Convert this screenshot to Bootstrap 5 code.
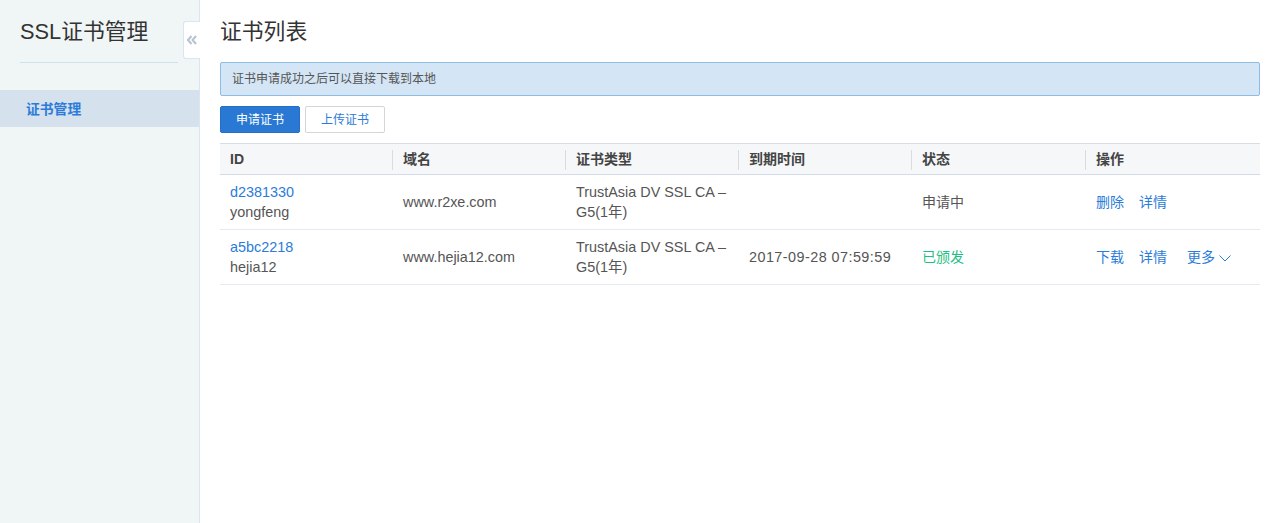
<!DOCTYPE html>
<html lang="zh">
<head>
  <meta charset="UTF-8" />
  <title>SSL证书管理</title>
  <link rel="stylesheet" href="https://cdn.jsdelivr.net/npm/bootstrap@5.3.2/dist/css/bootstrap.min.css" />
  <style>
    html, body { height: 100%; }
    body {
      font-family: "Liberation Sans", "Noto Sans CJK SC", sans-serif;
      font-size: 14px;
      color: #4a4a4a;
      overflow: hidden;
    }
    .shell { height: 523px; }
    .side {
      width: 200px;
      background: #f0f6f6;
      border-right: 1px solid #d7e6f0;
      position: relative;
    }
    .side-title {
      font-size: 21.8px;
      line-height: 30px;
      color: #333;
      margin: 17px 21px 0 20px;
      padding-bottom: 15px;
      border-bottom: 1px solid #cfe0ee;
      white-space: nowrap;
    }
    .side-item {
      margin-top: 27px;
      height: 37px;
      line-height: 39px;
      padding-left: 26px;
      background: #d5e1ed;
      color: #2b7cd9;
      font-size: 13.8px;
      font-weight: 700;
    }
    .side-toggle {
      position: absolute;
      top: 21px;
      right: -1px;
      width: 17px;
      height: 38px;
      background: #fff;
      border: 1px solid #d7e6f0;
      border-right: 0;
      border-radius: 3px 0 0 3px;
      display: flex;
      align-items: center;
      justify-content: center;
    }
    .main-area { padding: 0 19px 0 20px; }
    .page-title {
      font-size: 21.8px;
      line-height: 30px;
      font-weight: 400;
      color: #333;
      margin: 17px 0 15px;
    }
    .tip-bar {
      height: 34px;
      line-height: 33px;
      padding: 0 11px;
      margin-bottom: 10px;
      font-size: 12px;
      color: #555;
      background: #d4e6f5;
      border: 1px solid #8fbce2;
      border-radius: 2px;
    }
    .act-btn {
      width: 80px;
      height: 27px;
      padding: 0;
      font-size: 12px;
      line-height: 27px;
      border-radius: 2px;
    }
    .btn-apply { background: #2878d4; border-color: #2270ca; color: #fff; margin-right: 5px; }
    .btn-upload { background: #fff; border-color: #d5d5d5; color: #2b7cd9; }
    .cert-table { margin: 10px 0 0; table-layout: fixed; width: 1040px; }
    .cert-table th {
      height: 31px;
      padding: 0 10px;
      font-size: 14px;
      font-weight: 700;
      color: #444;
      background: #f6f7f9;
      border-top: 1px solid #d8dde3;
      border-bottom: 1px solid #d3dbe6;
      position: relative;
      vertical-align: middle;
    }
    .cert-table th + th::before {
      content: "";
      position: absolute;
      left: -1px;
      top: 6px;
      height: 20px;
      width: 1px;
      background: #d9dcdf;
    }
    .cert-table td {
      height: 55px;
      padding: 0 10px;
      font-size: 14.4px;
      line-height: 20px;
      color: #555;
      vertical-align: middle;
      border-bottom: 1px solid #e4eaf0;
    }
    .cert-table a { color: #2b7cd9; text-decoration: none; }
    .cert-table td.st-ok { color: #1fbf85; }
    .cert-table td.cjk-cell, .cert-table td.ops { font-size: 14px; }
    .cert-table td.date-cell { letter-spacing: .45px; }
    .ops a { margin-right: 15px; }
    .ops a.more-link { margin-left: 5px; margin-right: 0; }
  </style>
</head>
<body>
  <div class="shell d-flex">
    <aside class="side flex-shrink-0">
      <div class="side-title">SSL证书管理</div>
      <div class="side-item">证书管理</div>
      <div class="side-toggle">
        <svg width="10" height="10" viewBox="0 0 10 10" fill="none" stroke="#b4c4d0" stroke-width="2">
          <path d="M4.500 1 1 5l3.500 4M9 1 5.500 5 9 9" />
        </svg>
      </div>
    </aside>

    <main class="main-area flex-grow-1">
      <h1 class="page-title">证书列表</h1>
      <div class="tip-bar">证书申请成功之后可以直接下载到本地</div>
      <div class="d-flex">
        <button class="btn act-btn btn-apply">申请证书</button>
        <button class="btn act-btn btn-upload">上传证书</button>
      </div>

      <table class="table cert-table">
        <colgroup>
          <col style="width:173px"><col style="width:173px"><col style="width:173px">
          <col style="width:173px"><col style="width:174px"><col style="width:174px">
        </colgroup>
        <thead>
          <tr>
            <th>ID</th>
            <th>域名</th>
            <th>证书类型</th>
            <th>到期时间</th>
            <th>状态</th>
            <th>操作</th>
          </tr>
        </thead>
        <tbody>
          <tr>
            <td><a href="#">d2381330</a><br>yongfeng</td>
            <td>www.r2xe.com</td>
            <td>TrustAsia DV SSL CA – G5(1年)</td>
            <td></td>
            <td class="cjk-cell">申请中</td>
            <td class="ops"><a href="#">删除</a><a href="#">详情</a></td>
          </tr>
          <tr>
            <td><a href="#">a5bc2218</a><br>hejia12</td>
            <td>www.hejia12.com</td>
            <td>TrustAsia DV SSL CA – G5(1年)</td>
            <td class="date-cell">2017-09-28 07:59:59</td>
            <td class="cjk-cell st-ok">已颁发</td>
            <td class="ops text-nowrap"><a href="#">下载</a><a href="#">详情</a><a class="more-link" href="#">更多
              <svg width="12" height="7" viewBox="0 0 12 7" fill="none" stroke="#2b7cd9" stroke-width="1"><path d="M.5.500 6 6l5.500-5.500" /></svg></a></td>
          </tr>
        </tbody>
      </table>
    </main>
  </div>
  <script src="https://cdn.jsdelivr.net/npm/bootstrap@5.3.2/dist/js/bootstrap.bundle.min.js"></script>
</body>
</html>
